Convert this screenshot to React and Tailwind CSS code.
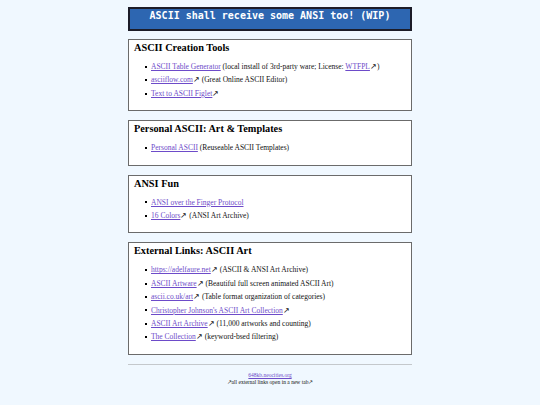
const serif = { fontFamily: '"Liberation Serif", "Times New Roman", serif' };

const sections = [
  {
    title: 'ASCII Creation Tools',
    items: [
      [{ link: 'ASCII Table Generator' }, ' (local install of 3rd-party ware; License: ', { link: 'WTFPL', ext: true }, ')'],
      [{ link: 'asciiflow.com', ext: true }, ' (Great Online ASCII Editor)'],
      [{ link: 'Text to ASCII Figlet', ext: true }],
    ],
  },
  {
    title: 'Personal ASCII: Art & Templates',
    items: [[{ link: 'Personal ASCII' }, ' (Reuseable ASCII Templates)']],
  },
  {
    title: 'ANSI Fun',
    items: [
      [{ link: 'ANSI over the Finger Protocol' }],
      [{ link: '16 Colors', ext: true }, ' (ANSI Art Archive)'],
    ],
  },
  {
    title: 'External Links: ASCII Art',
    items: [
      [{ link: 'https://adelfaure.net', ext: true }, ' (ASCII & ANSI Art Archive)'],
      [{ link: 'ASCII Artware', ext: true }, ' (Beautiful full screen animated ASCII Art)'],
      [{ link: 'ascii.co.uk/art', ext: true }, ' (Table format organization of categories)'],
      [{ link: "Christopher Johnson's ASCII Art Collection", ext: true }],
      [{ link: 'ASCII Art Archive', ext: true }, ' (11,000 artworks and counting)'],
      [{ link: 'The Collection', ext: true }, ' (keyword-bsed filtering)'],
    ],
  },
];

const Part = ({ part }) => {
  if (typeof part === 'string') return <span>{part}</span>;
  return (
    <>
      <a href="#" className="text-[#6d4bc9] underline">{part.link}</a>
      {part.ext && <span className="text-[#111]">↗</span>}
    </>
  );
};

const Section = ({ title, items }) => (
  <section className="bg-white border border-[#6b6b6b] pt-[2px] pb-[10px] px-[5px]">
    <h2 className="text-[10.3px] leading-[12px] font-bold text-black">{title}</h2>
    <ul className="mt-[6px] -ml-[5px]">
      {items.map((parts, i) => (
        <li key={i} className="flex items-center text-[7.5px] leading-[13.4px] text-[#111]">
          <span className="w-[2px] h-[2px] bg-black ml-[16px] mr-[4px] shrink-0" />
          <span className="whitespace-nowrap">
            {parts.map((p, j) => <Part key={j} part={p} />)}
          </span>
        </li>
      ))}
    </ul>
  </section>
);

export default function App() {
  return (
    <div className="min-h-screen bg-[#f0f8ff] pt-[7px]" style={serif}>
      <div className="w-[284px] mx-auto">
        <header className="bg-[#2d66b1] border-2 border-[#1c1c28] pt-[1px] pb-[7px] text-center">
          <h1
            className="text-white font-bold text-[10px] leading-[12px]"
            style={{ fontFamily: '"DejaVu Sans Mono", "Liberation Mono", monospace' }}
          >
            ASCII shall receive some ANSI too! (WIP)
          </h1>
        </header>
        <div className="mt-[8px] flex flex-col gap-[9px]">
          {sections.map((s) => (
            <Section key={s.title} title={s.title} items={s.items} />
          ))}
        </div>
        <footer className="mt-[9px] border-t border-[#c4c8cc] pt-[7px] text-center text-[5.5px] leading-[7px]">
          <div>
            <a href="#" className="text-[#6d4bc9] underline">648kb.neocities.org</a>
          </div>
          <div className="text-[#111]">↗all external links open in a new tab↗</div>
        </footer>
      </div>
    </div>
  );
}
